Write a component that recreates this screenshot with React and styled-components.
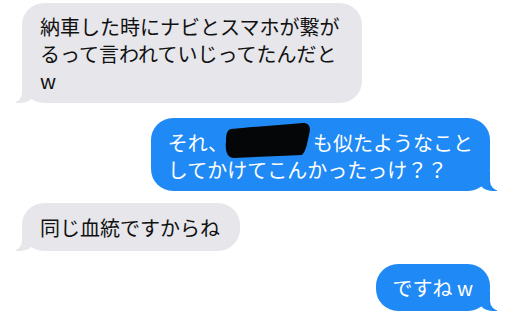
import React from 'react'
import styled, { createGlobalStyle, css } from 'styled-components'

const GlobalStyle = createGlobalStyle`
  html, body {
    margin: 0;
    padding: 0;
    background: #fff;
  }
  body {
    font-family: "Noto Sans CJK JP", "Noto Sans", sans-serif;
  }
`

const Thread = styled.div`
  width: 512px;
  height: 333px;
  box-sizing: border-box;
  padding: 3px 22px 0;
  display: flex;
  flex-direction: column;
  overflow: hidden;
`

const Bubble = styled.div`
  position: relative;
  box-sizing: border-box;
  font-size: 20px;
  line-height: 27px;
  border-radius: 22px;
  margin-top: ${(p) => p.$gap || 0}px;
  padding: ${(p) => p.$pad};
  white-space: nowrap;

  &::before,
  &::after {
    content: '';
    position: absolute;
    bottom: 0;
    height: 20px;
  }

  ${(p) =>
    p.$me
      ? css`
          align-self: flex-end;
          background: #1f8af5;
          color: #fff;
          &::before {
            right: -7px;
            width: 20px;
            background: #1f8af5;
            border-bottom-left-radius: 15px;
            z-index: 0;
          }
          &::after {
            right: -10px;
            width: 10px;
            background: #fff;
            border-bottom-left-radius: 10px;
            z-index: 1;
          }
        `
      : css`
          align-self: flex-start;
          background: #e6e6eb;
          color: #111;
          &::before {
            left: -6px;
            width: 20px;
            background: #e6e6eb;
            border-bottom-right-radius: 15px;
            z-index: 0;
          }
          &::after {
            left: -10px;
            width: 10px;
            background: #fff;
            border-bottom-right-radius: 10px;
            z-index: 1;
          }
        `}
`

const Text = styled.span`
  position: relative;
  z-index: 2;
`

const Redacted = styled.svg`
  display: inline-block;
  vertical-align: top;
  width: 88px;
  height: 27px;
  margin-left: -3px;
  overflow: visible;
`

export default function App() {
  return (
    <>
      <GlobalStyle />
      <Thread>
        <Bubble $pad="10px 23px 9px 18px">
          <Text>
            納車した時にナビとスマホが繋が
            <br />
            るって言われていじってたんだと
            <br />w
          </Text>
        </Bubble>

        <Bubble $me $gap={15} $pad="11px 17px 8px 17px">
          <Text>
            それ、
            <Redacted viewBox="0 0 88 27">
              <path
                d="M6 0 C 24 -2, 55 -4, 78 -6 C 85 -6, 86 -1, 84 6 C 82 15, 81 22, 77 26 C 56 27, 28 28, 9 29 C 2 29, 0 22, 1 12 C 1 5, 2 1, 6 0 Z"
                fill="#050607"
              />
            </Redacted>
            も似たようなこと
            <br />
            してかけてこんかったっけ？？
          </Text>
        </Bubble>

        <Bubble $gap={12} $pad="11px 20px 10px 18px">
          <Text>同じ血統ですからね</Text>
        </Bubble>

        <Bubble $me $gap={13} $pad="10px 17px 10px 16px">
          <Text>ですね w</Text>
        </Bubble>
      </Thread>
    </>
  )
}
